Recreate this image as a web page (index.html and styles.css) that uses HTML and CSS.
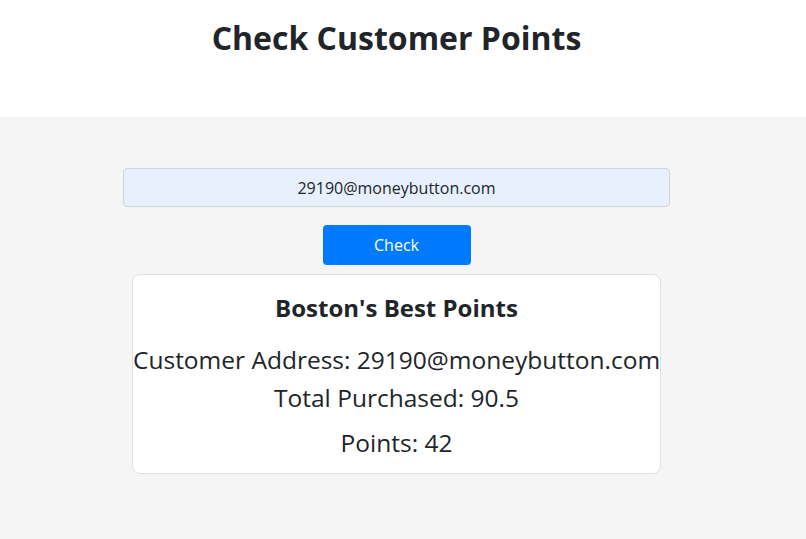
FILE: index.html
```html
<!DOCTYPE html>
<html lang="en">
<head>
  <meta charset="UTF-8">
  <meta name="viewport" content="width=device-width, initial-scale=1.0">
  <title>Check Customer Points</title>
  <link rel="stylesheet" href="styles.css">
</head>
<body>
  <div id="page-header">
    <h1>Check Customer Points</h1>
  </div>
  <div id="points-section">
    <input type="text" id="address-input" value="29190@moneybutton.com">
    <button id="check-button">Check</button>
    <div id="points-card">
      <h2>Boston's Best Points</h2>
      <div class="card-line">Customer Address: 29190@moneybutton.com</div>
      <div class="card-line">Total Purchased: 90.5</div>
      <div class="card-line points">Points: 42</div>
    </div>
  </div>
</body>
</html>
```

FILE: styles.css
```css
body, html {
  margin: 0;
  padding: 0;
  height: 100%;
  font-family: "Open Sans", sans-serif;
  color: #212529;
  background-color: #f5f5f5;
}
#page-header {
  height: 117px;
  background-color: #fff;
  padding-right: 13px;
  box-sizing: border-box;
  text-align: center;
}
#page-header h1 {
  margin: 0;
  padding-top: 16px;
  font-size: 32px;
  font-weight: 700;
}
#points-section {
  display: flex;
  flex-direction: column;
  align-items: center;
  padding: 51px 13px 40px 0;
}
#address-input {
  width: 547px;
  height: 39px;
  box-sizing: border-box;
  background-color: #e8f0fe;
  border: 1px solid #ccd4dc;
  border-radius: 4px;
  text-align: center;
  font-family: "Open Sans", sans-serif;
  font-size: 16px;
  color: #212529;
}
#check-button {
  margin-top: 18px;
  width: 148px;
  height: 40px;
  background-color: #007bff;
  color: #fff;
  border: none;
  border-radius: 4px;
  font-family: "Open Sans", sans-serif;
  font-size: 16px;
}
#points-card {
  margin-top: 9px;
  width: 529px;
  height: 200px;
  box-sizing: border-box;
  background-color: #fff;
  border: 1px solid #e0e0e0;
  border-radius: 8px;
  text-align: center;
  padding-top: 15px;
}
#points-card h2 {
  margin: 0 0 15px;
  font-size: 24px;
  line-height: 36px;
  font-weight: 700;
}
.card-line {
  font-size: 24.5px;
  line-height: 38px;
  white-space: nowrap;
}
.card-line.points {
  margin-top: 7px;
}
```
